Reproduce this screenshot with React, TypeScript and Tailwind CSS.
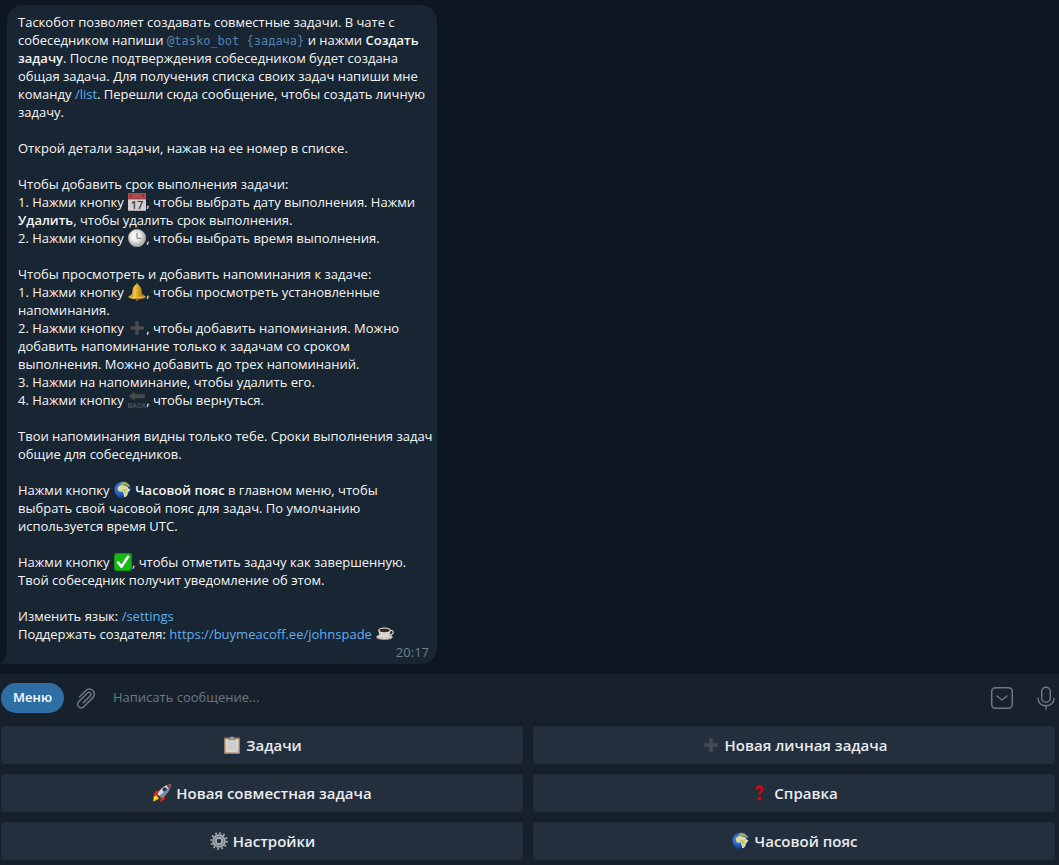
import type { ReactNode } from "react";

const Emoji = ({ label, children }: { label: string; children: ReactNode }) => {
  return (
    <svg
      viewBox="0 0 18 18"
      role="img"
      aria-label={label}
      className="inline-block w-[18px] h-[18px] ml-px align-top shrink-0"
    >
      {children}
    </svg>
  );
};

const Calendar = () => (
  <Emoji label="calendar">
    <rect x="0" y="1" width="18" height="17" fill="#d0d0d0" />
    <rect x="0" y="0" width="18" height="6" fill="#b04a4c" />
    <path d="M0 6h18" stroke="#8e3438" strokeWidth=".7" />
    <path d="M3 1.5v2M15 1.5v2" stroke="#6d2a2e" strokeWidth="1.6" />
    <path d="M0 17.5h18" stroke="#a7a7a7" />
    <text x="9" y="15.5" textAnchor="middle" fontSize="11" fontWeight="600" fill="#3d3d3d" className="font-['Open_Sans',sans-serif]">
      17
    </text>
  </Emoji>
);

const Clock = () => (
  <Emoji label="clock">
    <defs>
      <radialGradient id="clockFace" cx=".42" cy=".4">
        <stop offset=".5" stopColor="#f1f1ef" />
        <stop offset="1" stopColor="#b5b5b3" />
      </radialGradient>
    </defs>
    <circle cx="9" cy="9" r="8.7" fill="url(#clockFace)" stroke="#a5a6a6" strokeWidth=".6" />
    <path d="M9 3.8V9.3h4.2" fill="none" stroke="#777" strokeWidth="1" />
    <path d="M9 1.5v1M9 15.5v1M1.5 9h1M15.5 9h1" stroke="#bbb" strokeWidth=".7" />
  </Emoji>
);

const Bell = () => (
  <Emoji label="bell">
    <defs>
      <linearGradient id="bellBody">
        <stop offset="0" stopColor="#8f6614" />
        <stop offset=".38" stopColor="#efca48" />
        <stop offset=".6" stopColor="#cf9a1c" />
        <stop offset="1" stopColor="#946510" />
      </linearGradient>
    </defs>
    <circle cx="9" cy="1.4" r="1.2" fill="#c99c28" />
    <path d="M7 2h4l2.200 3.200.8 5.500 3.500 2.600c.8.8.4 1.500-.8 1.900l-3.800.8H5.100l-3.800-.8c-1.200-.4-1.500-1.200-.6-2l3.300-2.500.8-5.500z" fill="url(#bellBody)" />
    <path d="M.9 13.6c4 1.400 12 1.400 16 0" fill="none" stroke="#ecd068" strokeWidth=".8" />
    <path d="M6.800 15h4.500l-1 2.600H7.900z" fill="#a97818" />
  </Emoji>
);

const Plus = () => (
  <Emoji label="plus">
    <path d="M7.300 2.300h3.500v5h5v3.500h-5v5H7.300v-5h-5V7.300h5z" fill="#484b4e" />
  </Emoji>
);

const Back = () => (
  <Emoji label="back">
    <path d="M.8 5.200 6.500.5V3.300h10.300v3.900H6.500V10z" fill="#484b4e" />
    <text x="9" y="17" textAnchor="middle" fontSize="6.5" fontWeight="700" fill="#505356" className="font-['Liberation_Sans',sans-serif]">
      BACK
    </text>
  </Emoji>
);

const Globe = () => (
  <Emoji label="globe">
    <defs>
      <radialGradient id="globeSea" cx=".32" cy=".4" r=".65">
        <stop offset="0" stopColor="#5593e4" />
        <stop offset=".55" stopColor="#2458b9" />
        <stop offset="1" stopColor="#14255f" />
      </radialGradient>
    </defs>
    <circle cx="9" cy="9" r="8.700" fill="url(#globeSea)" />
    <path d="m6.500 2 2.400-1 3.100.3 2.900 2.200 1.500 2.400-2-.4-1.700-1.300-2.200.5-2-1-1.700.3z" fill="#9fae55" />
    <path d="M3.800 6.400 5.500 4.500l2.800-.5 2.500 1 2.400.2 1.300 2.200 2 1-1.600 2.100-1.300 1.500.1 1.600-1.900 2.500-1.600-.2-.6-3-1-2.300-2.800.2-1.700-1.600z" fill="#dcdc9c" />
    <path d="M7.500 8.300h5.200l-.6 2.600-1.200 1.800-1.500-2.600z" fill="#b4c470" />
  </Emoji>
);

const Check = () => (
  <Emoji label="done">
    <rect width="18" height="18" rx="3" fill="#0d970b" />
    <rect x="1" y="1" width="16" height="16" rx="2.400" fill="#18b616" />
    <path d="m4 9.200 3.400 4.600L14 3.800" fill="none" stroke="#fff" strokeWidth="2.500" strokeLinecap="round" strokeLinejoin="round" />
  </Emoji>
);

const Coffee = () => (
  <Emoji label="coffee">
    <path d="M8 3.500c-1.500-1.200 1-1.500-.2-3" fill="none" stroke="#3d464e" strokeWidth="1" />
    <ellipse cx="8.500" cy="12.200" rx="8.300" ry="2.800" fill="#a39d95" />
    <ellipse cx="8.500" cy="11.600" rx="7.900" ry="2.300" fill="#d2cdc6" />
    <path d="M14 5.600c4.800-1 4 4.200-.8 4.400" fill="none" stroke="#c4bfb8" strokeWidth="1.300" />
    <path d="M2.500 5c0 5 2.500 7.800 6 7.800s6-2.800 6-7.800z" fill="#d9d4cc" />
    <ellipse cx="8.500" cy="5.200" rx="6.200" ry="2.600" fill="#e6e1da" />
    <ellipse cx="8.500" cy="5.300" rx="5.100" ry="1.900" fill="#3d2720" />
  </Emoji>
);

const Clipboard = () => (
  <Emoji label="clipboard">
    <rect x="1" y="1.500" width="16" height="16.500" rx=".8" fill="#a07a52" />
    <path d="M2.500 3h13v13.500h-13z" fill="#d8d8d8" />
    <path d="M5 2.500h2.200L8 .4h2l.8 2.100H13v2H5z" fill="#969da2" />
    <path d="M4.500 7h9M4.500 9h9M4.500 11h9M4.500 13h9" stroke="#bcbcbc" strokeWidth=".8" />
    <path d="m12.500 16.500 3-3v3z" fill="#aeb0b1" />
  </Emoji>
);

const Rocket = () => (
  <Emoji label="rocket">
    <path d="M5 10.500 .7 12.300 0 17.800l4.500-2 2.200-2z" fill="#f4ac15" />
    <path d="m4.500 11-3 2.200L1 16l3.500-2 1.300-1.600z" fill="#ffe34a" />
    <path d="m6.300 6-4.500 2-1.500 4 4.600-1.500zM12 11.400l-.5 4-4.200 2.500.6-4.500z" fill="#dd2b13" />
    <path d="M4.500 10.200C7 4.500 11.500 1 17.800.2 17.200 6.500 13.500 11 8 13.700z" fill="#cfdae2" />
    <path d="M6 11.900C10 9 14 5.500 17.800.2 17.200 6.500 13.500 11 8 13.700z" fill="#6e8ca4" />
    <path d="M13.200 1.400 17.800.2l-1.200 4.600z" fill="#b92d24" />
    <circle cx="11.700" cy="5.500" r="2.300" fill="#242f40" stroke="#9eb0be" strokeWidth=".6" />
    <path d="m4.500 10.200 3.500 3.500-1.500 1L3.700 12z" fill="#7b2518" />
  </Emoji>
);

const Question = () => (
  <Emoji label="question">
    <path d="M5.500 5.500C5.600 3.500 6.700 2.700 8.300 2.700c1.800 0 2.800.9 2.800 2.500 0 2.200-2.400 2.700-2.400 5.300" fill="none" stroke="#d60808" strokeWidth="2.600" />
    <circle cx="8.500" cy="14.500" r="1.900" fill="#d60808" />
  </Emoji>
);

const Gear = () => (
  <Emoji label="gear">
    <circle cx="9" cy="9" r="7.800" fill="none" stroke="#a4aaae" strokeWidth="2" strokeDasharray="1.750 2.334" />
    <circle cx="9" cy="9" r="5" fill="none" stroke="#a4aaae" strokeWidth="3.600" />
    <circle cx="9" cy="9" r="4.700" fill="none" stroke="#6d747b" strokeWidth="1" />
    <circle cx="9" cy="9" r="2.900" fill="none" stroke="#cacdcf" strokeWidth="1" />
  </Emoji>
);

const keyboard = [
  { text: "Задачи", icon: <Clipboard /> },
  { text: "Новая личная задача", icon: <Plus /> },
  { text: "Новая совместная задача", icon: <Rocket /> },
  { text: "Справка", icon: <Question /> },
  { text: "Настройки", icon: <Gear /> },
  { text: "Часовой пояс", icon: <Globe /> },
];

const Link = ({ href, children }: { href: string; children: ReactNode }) => (
  <a href={href} className="text-[#62aeef] hover:underline">
    {children}
  </a>
);

const Message = () => {
  return (
    <article className="relative w-full max-w-[430px] ml-[7px] mt-[5px] pt-2 pl-[11px] pr-1 pb-[3px] rounded-2xl rounded-bl-none bg-[#182533] text-[13px] leading-[18px] text-[#f5f5f5]">
      <svg viewBox="0 0 7 18" className="absolute -left-[7px] bottom-0 w-[7px] h-[18px]" aria-hidden="true">
        <path d="M7 0v18H1.500q-1.500-.7 0-1.500Q7 12 7 0z" fill="#182533" />
      </svg>
      <div className="flex flex-col gap-[18px]">
        <p>
          Таскобот позволяет создавать совместные задачи. В чате с собеседником напиши{" "}
          <code className="font-['DejaVu_Sans_Mono',monospace] text-[12px] leading-none text-[#5282af]">@tasko_bot {"{задача}"}</code> и нажми{" "}
          <b className="font-semibold">Создать задачу</b>. После подтверждения собеседником будет создана общая
          задача. Для получения списка своих задач напиши мне команду <Link href="#list">/list</Link>. Перешли
          сюда сообщение, чтобы создать личную задачу.
        </p>
        <p>Открой детали задачи, нажав на ее номер в списке.</p>
        <div>
          <p>Чтобы добавить срок выполнения задачи:</p>
          <p>
            1. Нажми кнопку <Calendar />, чтобы выбрать дату выполнения. Нажми{" "}
            <b className="font-semibold">Удалить</b>, чтобы удалить срок выполнения.
          </p>
          <p>
            2. Нажми кнопку <Clock />, чтобы выбрать время выполнения.
          </p>
        </div>
        <div>
          <p>Чтобы просмотреть и добавить напоминания к задаче:</p>
          <p>
            1. Нажми кнопку <Bell />, чтобы просмотреть установленные напоминания.
          </p>
          <p>
            2. Нажми кнопку <Plus />, чтобы добавить напоминания. Можно добавить напоминание только к задачам
            со сроком выполнения. Можно добавить до трех напоминаний.
          </p>
          <p>3. Нажми на напоминание, чтобы удалить его.</p>
          <p>
            4. Нажми кнопку <Back />, чтобы вернуться.
          </p>
        </div>
        <p>Твои напоминания видны только тебе. Сроки выполнения задач общие для собеседников.</p>
        <p>
          Нажми кнопку <Globe /> <b className="font-semibold">Часовой пояс</b> в главном меню, чтобы выбрать
          свой часовой пояс для задач. По умолчанию используется время UTC.
        </p>
        <p>
          Нажми кнопку <Check />, чтобы отметить задачу как завершенную. Твой собеседник получит уведомление
          об этом.
        </p>
        <div>
          <p>
            Изменить язык: <Link href="#settings">/settings</Link>
          </p>
          <p>
            Поддержать создателя:{" "}
            <Link href="https://buymeacoff.ee/johnspade">https://buymeacoff.ee/johnspade</Link> <Coffee />
          </p>
        </div>
      </div>
      <time className="block pr-1 text-right text-[#6d7f8f]">20:17</time>
    </article>
  );
};

const Composer = () => {
  return (
    <div className="flex items-center h-12 pl-px pr-1">
      <button type="button" className="h-[30px] px-3 rounded-full bg-[#2f6ea5] text-[13px] font-semibold text-white">
        Меню
      </button>
      <button type="button" aria-label="Прикрепить файл" className="ml-[10px] text-[#6c7883]">
        <svg viewBox="0 0 22 24" className="w-[22px] h-6" fill="none" stroke="currentColor" strokeWidth="1.500" strokeLinecap="round">
          <path
            transform="translate(11.500 12) rotate(45)"
            d="M-5 3.500V-5.500a5 5 0 0 1 10 0V7.500a3.600 3.600 0 0 1-7.200 0V-5a2 2 0 0 1 4 0V5"
          />
        </svg>
      </button>
      <input
        type="text"
        aria-label="Сообщение"
        placeholder="Написать сообщение..."
        className="flex-1 min-w-0 ml-[17px] bg-transparent text-[13px] text-white placeholder:text-[#6c7883] outline-none"
      />
      <button type="button" aria-label="Клавиатура бота" className="text-[#6c7883]">
        <svg viewBox="0 0 24 24" className="w-6 h-6" fill="none" stroke="currentColor" strokeWidth="1.500" strokeLinecap="round" strokeLinejoin="round">
          <rect x="1.700" y="1.700" width="20.600" height="20.600" rx="4" />
          <path d="m7 10 5 4 5-4" />
        </svg>
      </button>
      <button type="button" aria-label="Голосовое сообщение" className="ml-[23px] text-[#6c7883]">
        <svg viewBox="0 0 18 24" className="w-[18px] h-6" fill="none" stroke="currentColor" strokeWidth="1.500" strokeLinecap="round">
          <rect x="4.700" y="1.200" width="8.600" height="15" rx="4.300" />
          <path d="M1 12.200c.2 4.500 3.300 7.500 8 7.500s7.800-3 8-7.500M9 19.700v3.500" />
        </svg>
      </button>
    </div>
  );
};

const App = () => {
  return (
    <div className="flex flex-col min-h-screen bg-[#0e1621] font-['Open_Sans',sans-serif]">
      <main className="flex-1 flex items-start">
        <Message />
      </main>
      <footer className="mt-[9px] border-t border-[#0b121a] bg-[#17212b]">
        <Composer />
        <div className="grid grid-cols-2 gap-2.5 pt-1 pb-[5px] pl-px pr-1">
          {keyboard.map((key) => (
            <button
              key={key.text}
              type="button"
              className="flex items-center justify-center gap-[5px] h-[38px] rounded bg-[#242f3d] text-[15px] font-semibold text-[#e9ecf0]"
            >
              {key.icon}
              {key.text}
            </button>
          ))}
        </div>
      </footer>
    </div>
  );
};

export default App;
